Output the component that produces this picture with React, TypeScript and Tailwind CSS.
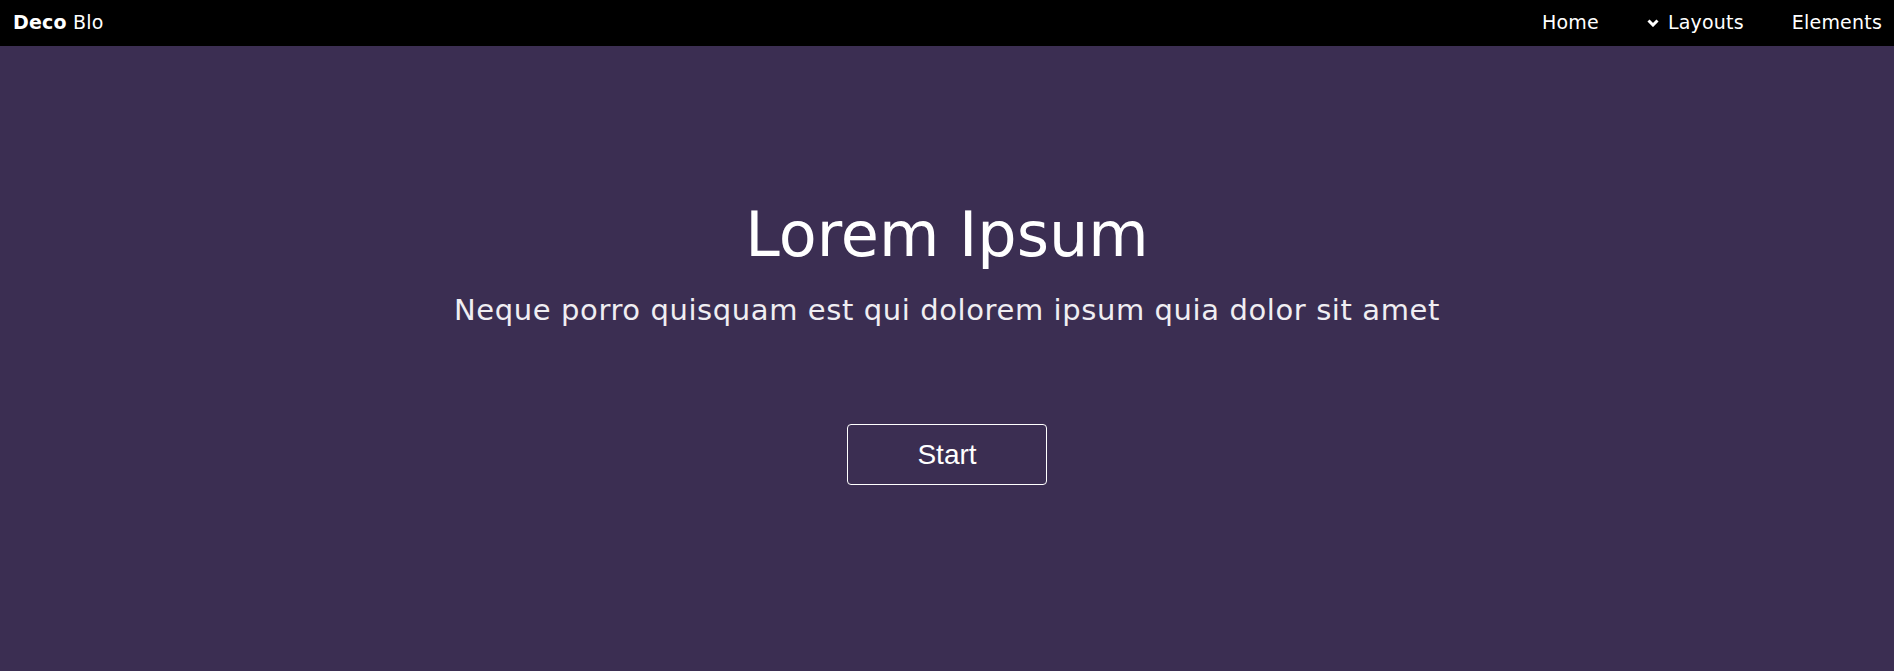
import React from "react";

export default function App() {
  const verdana = { fontFamily: '"DejaVu Sans", Verdana, sans-serif' };
  return (
    <div className="w-full min-h-[671px] flex flex-col" style={verdana}>
      <nav className="h-[46px] bg-black flex items-center justify-between pl-[13px] pr-[12px] text-white text-[19px] leading-[19px] font-['DejaVu_Sans',Verdana,sans-serif]">
        <div className="whitespace-nowrap pb-[2px] tracking-[0.2px]">
          <span className="font-bold">Deco</span> Blo
        </div>
        <div className="flex items-center gap-[48px] pb-[2px] tracking-[0.2px]">
          <a className="whitespace-nowrap">Home</a>
          <a className="flex items-center gap-[9px] whitespace-nowrap">
            <svg width="12" height="8" viewBox="0 0 12 8" className="mt-[1px]">
              <polyline points="1.5,1.5 6,6 10.5,1.5" fill="none" stroke="white" strokeWidth="3" strokeLinecap="butt" strokeLinejoin="miter" />
            </svg>
            Layouts
          </a>
          <a className="whitespace-nowrap">Elements</a>
        </div>
      </nav>
      <main className="flex-1 h-[625px] bg-[#3b2e52] flex flex-col items-center pt-[158px]">
        <h1 className="text-white text-[62px] leading-[62px] font-['DejaVu_Sans',Verdana,sans-serif] font-normal whitespace-nowrap">
          Lorem Ipsum
        </h1>
        <p className="mt-[30px] text-[#f0eef2] text-[29px] leading-[29px] tracking-[0.6px] font-['DejaVu_Sans',Verdana,sans-serif] whitespace-nowrap">
          Neque porro quisquam est qui dolorem ipsum quia dolor sit amet
        </p>
        <button className="mt-[99px] w-[200px] h-[61px] border border-white rounded-[4px] text-white text-[28px] font-['Liberation_Sans',Arial,sans-serif] flex items-center justify-center bg-transparent">
          Start
        </button>
      </main>
    </div>
  );
}
